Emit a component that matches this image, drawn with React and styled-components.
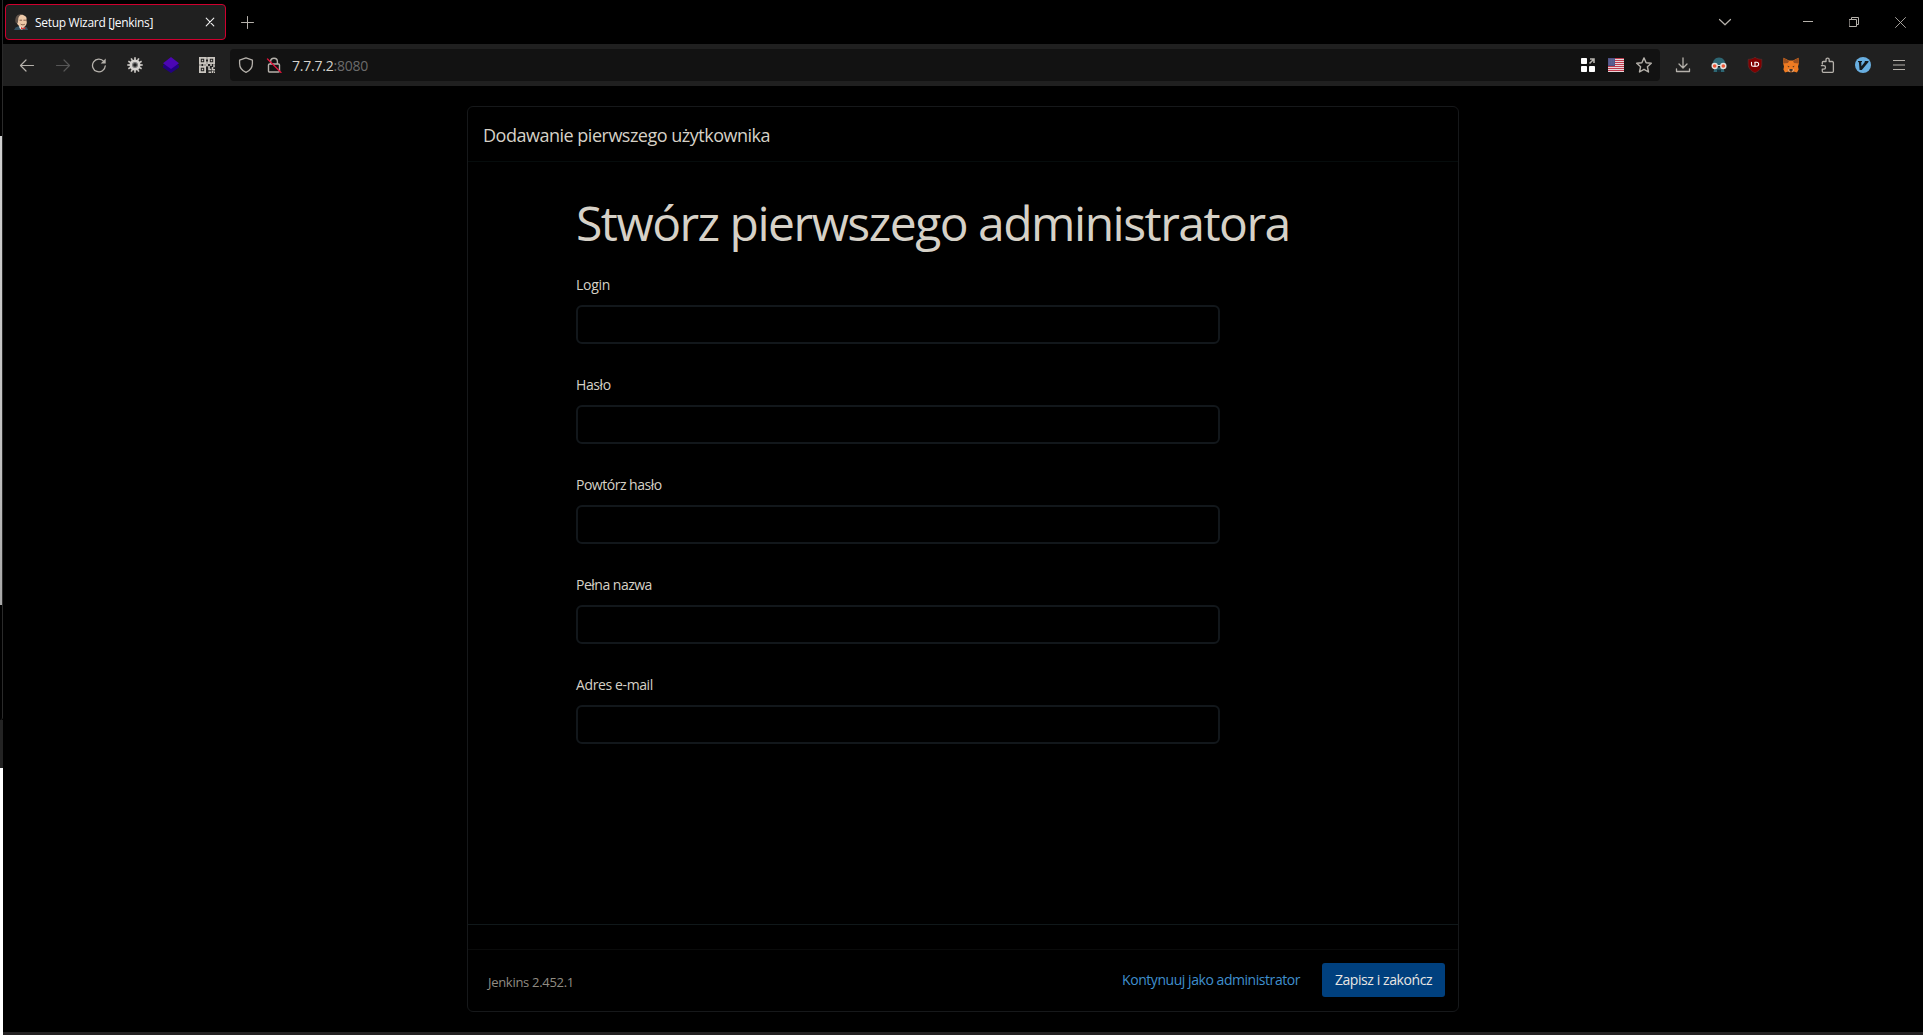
import React from "react";
import styled, { createGlobalStyle } from "styled-components";

const GlobalStyle = createGlobalStyle`
  *, *::before, *::after { box-sizing: border-box; }
  html, body { margin: 0; padding: 0; background: #000; }
  body { font-family: "Segoe UI", "Open Sans", "Noto Sans", sans-serif; overflow: hidden; }
  h1, h2 { margin: 0; font-weight: 400; }
`;

const Screen = styled.div`
  display: grid;
  grid-template-columns: 3px 1fr;
  width: 1923px;
  height: 1035px;
  background: #000;
  overflow: hidden;
`;

/* Sliver of the windows lying behind the browser */
const Backdrop = styled.div`
  display: flex;
  flex-direction: column;
`;

const Sliver = styled.div`
  height: ${(p) => p.$height}px;
  flex: none;
  background: ${(p) => p.$fill};
  border-right: ${(p) => (p.$edge ? "1px solid #2a2a2a" : "none")};
  border-bottom-right-radius: ${(p) => (p.$round ? "3px" : "0")};
`;

const Browser = styled.div`
  display: flex;
  flex-direction: column;
  min-width: 0;
  border-bottom: 3px solid #232122;
`;

const TabStrip = styled.header`
  display: flex;
  align-items: center;
  flex: none;
  height: 44px;
  padding-left: 2px;
`;

const Tab = styled.div`
  display: flex;
  align-items: center;
  width: 221px;
  height: 36px;
  padding: 0 7px;
  background: #202020;
  border: 1px solid #d0002f;
  border-radius: 4px;
`;

const TabTitle = styled.span`
  flex: 1;
  margin-left: 6px;
  padding-top: 2px;
  color: #fbfbfe;
  font-size: 12px;
  line-height: 16px;
  letter-spacing: ${(p) => p.$track}px;
  white-space: nowrap;
`;

const IconButton = styled.button`
  display: flex;
  align-items: center;
  justify-content: center;
  flex: none;
  width: ${(p) => p.$width || 36}px;
  height: ${(p) => p.$height || 32}px;
  padding: 0;
  border: 0;
  background: none;
  color: ${(p) => p.$color || "#b5b1ab"};

  svg { display: block; flex: none; }
`;

const Spacer = styled.div`
  flex: 1;
`;

const WindowControls = styled.div`
  display: flex;
  margin-left: 42px;
`;

const Toolbar = styled.nav`
  display: flex;
  align-items: center;
  flex: none;
  height: 42px;
  padding: 0 6px;
  background: #202020;
`;

const UrlBar = styled.div`
  display: flex;
  align-items: center;
  flex: 1;
  height: 32px;
  margin: 0 5px;
  padding: 0 2px;
  background: #121212;
  border-radius: 4px;
`;

const Url = styled.span`
  flex: 1;
  padding: 2px 0 0 4px;
  color: #d5d2cc;
  font-size: 14px;
  line-height: 20px;
  letter-spacing: ${(p) => p.$track}px;
`;

const Port = styled.span`
  color: #6b6b6b;
`;

const Page = styled.main`
  display: flex;
  flex: 1;
  padding: 20px 464px;
`;

const Wizard = styled.section`
  display: flex;
  flex-direction: column;
  width: 992px;
  height: 906px;
  border: 1px solid #16181a;
  border-radius: 6px;
  color: #d6d1c7;
`;

const WizardHeader = styled.div`
  display: flex;
  align-items: center;
  height: 55px;
  padding: 1px 15px 0;
  border-bottom: 1px solid #060c0c;
`;

const WizardTitle = styled.h2`
  font-size: 18px;
  line-height: 24px;
  letter-spacing: ${(p) => p.$track}px;
`;

const WizardBody = styled.form`
  flex: 1;
  padding: 28px 108px 0;
  border-bottom: 1px solid #10181a;
`;

const Heading = styled.h1`
  height: 65px;
  font-size: 48px;
  line-height: 65px;
  letter-spacing: ${(p) => p.$track}px;
  white-space: nowrap;
`;

const Fields = styled.div`
  display: grid;
  gap: 31px;
  margin-top: 20px;
`;

const Field = styled.label`
  display: grid;
  grid-template-rows: 20px 39px;
  gap: 10px;
  width: 644px;
`;

const FieldName = styled.span`
  font-size: 14px;
  line-height: 20px;
  letter-spacing: ${(p) => p.$track}px;
`;

const Input = styled.input`
  width: 100%;
  height: 39px;
  border: 2px solid #12171b;
  border-radius: 6px;
  background: transparent;
  color: inherit;
  outline: none;
`;

const Gap = styled.div`
  height: 25px;
  flex: none;
  border-bottom: 1px solid #0a0b0b;
`;

const WizardFooter = styled.footer`
  display: flex;
  align-items: center;
  flex: none;
  height: 61px;
  padding: 0 13px 1px 20px;
`;

const Version = styled.span`
  flex: 1;
  padding-top: 4px;
  color: #918c83;
  font-size: 13px;
  line-height: 18px;
  letter-spacing: ${(p) => p.$track}px;
`;

const LinkButton = styled.button`
  padding: 0;
  margin-right: 22px;
  border: 0;
  background: none;
  color: #3f8fce;
  font: 14px/20px "Segoe UI", "Open Sans", "Noto Sans", sans-serif;
  letter-spacing: ${(p) => p.$track}px;
`;

const PrimaryButton = styled.button`
  width: 123px;
  height: 34px;
  padding: 0;
  border: 0;
  border-radius: 3px;
  background: #00407e;
  color: #e8e6e3;
  font: 14px/20px "Segoe UI", "Open Sans", "Noto Sans", sans-serif;
  letter-spacing: ${(p) => p.$track}px;
`;

const Svg = ({ size = 16, children, ...rest }) => (
  <svg width={size} height={size} viewBox={`0 0 ${size} ${size}`} fill="none" stroke="currentColor" strokeWidth="1.2" strokeLinecap="round" strokeLinejoin="round" {...rest}>
    {children}
  </svg>
);

const JenkinsIcon = () => (
  <Svg stroke="none">
    <path d="M1 16l1.5-2.500 3.500-1.500h5l3 1.500 1 2.500z" fill="#335061" />
    <path d="M6 11h5l-.5 3.500-2 1.500-2-2z" fill="#f2efe9" />
    <path d="M3 5.500C3 2 5.500.8 8.500.8S14 3 14 6.500 12.500 13.300 9.500 13.300 3 10 3 5.500z" fill="#edc9a8" />
    <path d="M2.500 8.500C1.500 3 4.500 0 8.500.4 6 1.500 5.200 3.500 5.200 6l-.6 3.500z" fill="#5e5148" />
    <path d="M13 3.500c1 1.500 1.200 3 1 5l-.9-2z" fill="#6b594c" />
    <path d="M7 6.200h1.700M10.800 6.200h1.700M8 10.300c1.300.8 2.500.7 3.500.1" stroke="#76503f" strokeWidth=".9" />
    <path d="M8 13l2 .9 2.200-1v2.700L10 14.800 8 15.800z" fill="#d33833" />
  </Svg>
);

const CloseIcon = () => (
  <Svg size={10} strokeWidth="1.100"><path d="M1.200 1.200l7.600 7.600M8.800 1.200L1.200 8.800" /></Svg>
);

const PlusIcon = () => (
  <Svg size={13} strokeWidth="1"><path d="M6.500.5v12M.5 6.500h12" /></Svg>
);

const ChevronIcon = () => (
  <Svg size={14}><path d="M1.500 4.500L7 9.800l5.500-5.300" /></Svg>
);

const MinimizeIcon = () => (
  <Svg size={10} strokeWidth="1" strokeLinecap="butt"><path d="M0 4.500h10" /></Svg>
);

const RestoreIcon = () => (
  <Svg size={10} strokeWidth="1" strokeLinejoin="miter"><path d="M.5 2.500h7v7h-7zM2.500 2.500v-2h7v7h-2" /></Svg>
);

const WindowCloseIcon = () => (
  <Svg size={11} strokeWidth=".9"><path d="M.5.5l10 10M10.500.5l-10 10" /></Svg>
);

const BackIcon = () => (
  <Svg><path d="M14.500 8.500h-13M7 3L1.500 8.500 7 14" /></Svg>
);

const ForwardIcon = () => (
  <Svg><path d="M1.500 8.500h13M9 3l5.500 5.500L9 14" /></Svg>
);

const ReloadIcon = () => (
  <Svg>
    <path d="M14.300 8.800A6.400 6.400 0 1 1 12.800 4.300" strokeWidth="1.300" />
    <path d="M14.700 1.500v5H9.700z" fill="currentColor" stroke="none" />
  </Svg>
);

const GearIcon = () => (
  <Svg stroke="none">
    <g stroke="#c9c6c2" strokeWidth="1.700" strokeLinecap="butt">
      {[0, 30, 60, 90, 120, 150].map((a) => (
        <path key={a} d="M8 .3v15.400" transform={`rotate(${a} 8 8)`} />
      ))}
    </g>
    <circle cx="8" cy="8" r="5.500" fill="#d6d3cf" />
    <circle cx="8" cy="8" r="3" fill="#777" />
    <circle cx="8" cy="8" r="1.800" fill="#202020" />
  </Svg>
);

const LayersIcon = () => (
  <Svg stroke="none">
    <path d="M0 8.500L8 3l8 5.500v2L8 16 0 10.500z" fill="#220080" />
    <path d="M8 0l8 6.200L8 12 0 6.200z" fill="#4c06b4" />
  </Svg>
);

const QrIcon = () => (
  <Svg stroke="#c9c5bf" strokeWidth="1.800" strokeLinecap="butt" strokeLinejoin="miter">
    <path d="M.9.9h5.200v5.200H.9zM9.900.9h5.200v5.200H9.900zM.9 9.900h5.200v5.200H.9z" />
    <path d="M2.800 3.500h1.400M11.800 3.500h1.400M2.800 12.500h1.400M8 0v2.500M8 4.500v5M0 8h2.500M4 8h5M11 8h2M15 7.200v3M10 9v3.500h2.200M13.500 10v2.800H16M9.500 15.200h2.500M13.500 14v2M15.500 14.500v1.500" strokeWidth="1.600" />
  </Svg>
);

const ShieldIcon = () => (
  <Svg><path d="M8 .9l6.400 2.300v3.300c0 4-2 7-6.400 8.800C3.600 13.500 1.600 10.500 1.600 6.500V3.200z" strokeWidth="1.300" /></Svg>
);

const InsecureIcon = () => (
  <Svg>
    <path d="M4.600 7V4.600a3.400 3.400 0 0 1 6.800 0V7M3.500 7h9a1 1 0 0 1 1 1v6a1 1 0 0 1-1 1h-9a1 1 0 0 1-1-1V8a1 1 0 0 1 1-1z" strokeWidth="1.400" />
    <path d="M1.500 2l13.500 13.500" stroke="#e2143c" strokeWidth="1.300" />
  </Svg>
);

const WidgetsIcon = () => (
  <Svg size={14} stroke="none">
    <rect width="6" height="6" rx=".8" fill="#fff" />
    <rect y="8" width="6" height="6" rx=".8" fill="#fff" />
    <rect x="8" y="8" width="6" height="6" rx=".8" fill="#fff" />
    <path d="M8.500 5.500L12.500 1.500M9 1h4v4" stroke="#b8b5b0" strokeWidth="1.600" strokeLinecap="butt" strokeLinejoin="miter" />
  </Svg>
);

const FlagIcon = () => (
  <Svg stroke="none">
    <rect y="1" width="16" height="14" fill="#ece8ea" />
    {[1, 3, 5, 7, 9, 11, 13].map((y) => (
      <rect key={y} y={y} width="16" height="1.100" fill="#bf3a4c" />
    ))}
    <rect y="1" width="7" height="8" fill="#4c4f83" />
    <path d="M1 3h5M1 5h5M1 7h5" stroke="#7d80aa" strokeWidth=".7" strokeDasharray="1 1" />
  </Svg>
);

const StarIcon = () => (
  <Svg><path d="M8 .9l2.100 4.800 5.200.5-3.900 3.500 1.100 5.300L8 12.300 3.500 15l1.100-5.300L.7 6.200l5.200-.5z" strokeWidth="1.400" /></Svg>
);

const DownloadIcon = () => (
  <Svg><path d="M8 1v9.500M4 7l4 4 4-4M1.500 11.800v2.700h13v-2.700" strokeWidth="1.300" /></Svg>
);

const SpyIcon = () => (
  <Svg stroke="none">
    <path d="M1.500 8.500C1.500 3.500 4 .5 8 .5s6.500 3 6.500 8z" fill="#2d6673" />
    <path d="M2.500 15l1-4.500h9l1 4.500z" fill="#2d6673" />
    <path d="M6 12.500h4V15H6z" fill="#152e38" />
    <path d="M6 8.500h4" stroke="#e3e0dc" strokeWidth="1.200" />
    <circle cx="3.700" cy="9" r="2.500" fill="#ee5636" stroke="#e3e0dc" strokeWidth="1.400" />
    <circle cx="12.300" cy="9" r="2.500" fill="#ee5636" stroke="#e3e0dc" strokeWidth="1.400" />
  </Svg>
);

const UblockIcon = () => (
  <Svg stroke="none">
    <path d="M8 .3c2 1.500 4.500 2 6.800 2v5c0 4-2.500 6.500-6.800 8.500C3.700 13.800 1.200 11.300 1.200 7.300v-5C3.500 2.300 6 1.800 8 .3z" fill="#800000" stroke="#5c3030" strokeWidth=".6" />
    <path d="M4.500 5.300v2.500a1.400 1.400 0 0 0 1.400 1.400H8V5.300" stroke="#fff" strokeWidth="1.100" />
    <path d="M8 5.300h1.700a1.900 1.900 0 0 1 0 3.900H8" stroke="#fff" strokeWidth="1.100" />
  </Svg>
);

const FoxIcon = () => (
  <Svg stroke="none">
    <path d="M.5.7L6 3.500h4L15.500.7 16 6l-1 3.500.6 3-1.600 2.900-3.500-.9-1 .8h-3l-1-.8-3.500.9L.4 12.500 1 9.500 0 6z" fill="#ef7b22" />
    <path d="M.5.7L6 4 5 6 0 6.500zM15.500.7L10 4l1 2 5 .5z" fill="#9c501f" />
    <path d="M4.300 8.700l2.200.9-.7.800zM11.700 8.700l-2.200.9.7.800z" fill="#47301e" />
    <path d="M6.200 13l.7-1h2.200l.7 1-.8 1.500H7z" fill="#3c3532" />
    <path d="M5.400 12.600l.8 2M10.600 12.600l-.8 2" stroke="#d6c2b1" strokeWidth=".8" />
  </Svg>
);

const PuzzleIcon = () => (
  <Svg><path d="M3.300 7V5.500a1 1 0 0 1 1-1H7V2.700a1.600 1.600 0 0 1 3.200 0v1.800h3a1.200 1.200 0 0 1 1.200 1.200v8.600a1 1 0 0 1-1 1H4.300a1 1 0 0 1-1-1v-2.200h1.500a1.700 1.700 0 0 0 0-3.400H2.400" strokeWidth="1.300" /></Svg>
);

const VimiumIcon = () => (
  <Svg stroke="none">
    <circle cx="8" cy="8" r="8" fill="#68aee0" />
    <path d="M3 4h4v1l-.8.300.3 4L10 4.800l-.5-.8H13.500v1L6.800 13H4.600L3.900 5.300 3 5z" fill="#14191d" />
  </Svg>
);

const MenuIcon = () => (
  <Svg size={14} strokeLinecap="butt"><path d="M1 2.500h12M1 7h12M1 11.500h12" strokeWidth="1.200" /></Svg>
);

const navigation = [
  { label: "Wstecz", icon: BackIcon },
  { label: "Dalej", icon: ForwardIcon, color: "#565656" },
  { label: "Odśwież", icon: ReloadIcon },
  { label: "Ustawienia", icon: GearIcon },
  { label: "Warstwy", icon: LayersIcon },
  { label: "Kod QR", icon: QrIcon },
];

const pageActions = [
  { label: "Widżety", icon: WidgetsIcon },
  { label: "Język", icon: FlagIcon },
  { label: "Zakładka", icon: StarIcon },
];

const extensions = [
  { label: "Pobrane", icon: DownloadIcon },
  { label: "Prywatność", icon: SpyIcon },
  { label: "uBlock", icon: UblockIcon },
  { label: "MetaMask", icon: FoxIcon },
  { label: "Rozszerzenia", icon: PuzzleIcon },
  { label: "Vimium", icon: VimiumIcon },
  { label: "Menu", icon: MenuIcon },
];

const fields = [
  { name: "Login", type: "text", track: -0.3 },
  { name: "Hasło", type: "password", track: -0.4 },
  { name: "Powtórz hasło", type: "password", track: -0.49 },
  { name: "Pełna nazwa", type: "text", track: -0.5 },
  { name: "Adres e-mail", type: "email", track: -0.38 },
];

const renderButtons = (items, width) =>
  items.map(({ label, icon: Icon, color }) => (
    <IconButton key={label} type="button" aria-label={label} $width={width} $color={color}>
      <Icon />
    </IconButton>
  ));

export default function App() {
  return (
    <>
      <GlobalStyle />
      <Screen>
        <Backdrop>
          <Sliver $height={136} $fill="#000" $edge />
          <Sliver $height={469} $fill="linear-gradient(#d0d0d0, #c0c0c0 70%, #a8a8a8)" $edge />
          <Sliver $height={115} $fill="#000" $edge $round />
          <Sliver $height={48} $fill="#232323" />
          <Sliver $height={267} $fill="#fff" />
        </Backdrop>
        <Browser>
          <TabStrip>
            <Tab>
              <JenkinsIcon />
              <TabTitle $track={-0.3}>Setup Wizard [Jenkins]</TabTitle>
              <IconButton type="button" aria-label="Zamknij kartę" $width={16} $color="#f0f0f0"><CloseIcon /></IconButton>
            </Tab>
            <IconButton type="button" aria-label="Nowa karta" $width={43}><PlusIcon /></IconButton>
            <Spacer />
            <IconButton type="button" aria-label="Lista kart"><ChevronIcon /></IconButton>
            <WindowControls>
              <IconButton type="button" aria-label="Minimalizuj" $width={46}><MinimizeIcon /></IconButton>
              <IconButton type="button" aria-label="Przywróć" $width={46}><RestoreIcon /></IconButton>
              <IconButton type="button" aria-label="Zamknij" $width={46}><WindowCloseIcon /></IconButton>
            </WindowControls>
          </TabStrip>
          <Toolbar>
            {renderButtons(navigation, 36)}
            <UrlBar>
              <IconButton type="button" aria-label="Ochrona" $width={28}><ShieldIcon /></IconButton>
              <IconButton type="button" aria-label="Połączenie" $width={28}><InsecureIcon /></IconButton>
              <Url $track={-0.23}>7.7.7.2<Port>:8080</Port></Url>
              {renderButtons(pageActions, 28)}
            </UrlBar>
            {renderButtons(extensions, 36)}
          </Toolbar>
          <Page>
            <Wizard>
              <WizardHeader>
                <WizardTitle $track={-0.49}>Dodawanie pierwszego użytkownika</WizardTitle>
              </WizardHeader>
              <WizardBody>
                <Heading $track={-1.5}>Stwórz pierwszego administratora</Heading>
                <Fields>
                  {fields.map((f) => (
                    <Field key={f.name}>
                      <FieldName $track={f.track}>{f.name}</FieldName>
                      <Input type={f.type} />
                    </Field>
                  ))}
                </Fields>
              </WizardBody>
              <Gap />
              <WizardFooter>
                <Version $track={-0.3}>Jenkins 2.452.1</Version>
                <LinkButton type="button" $track={-0.45}>Kontynuuj jako administrator</LinkButton>
                <PrimaryButton type="button" $track={-0.42}>Zapisz i zakończ</PrimaryButton>
              </WizardFooter>
            </Wizard>
          </Page>
        </Browser>
      </Screen>
    </>
  );
}
